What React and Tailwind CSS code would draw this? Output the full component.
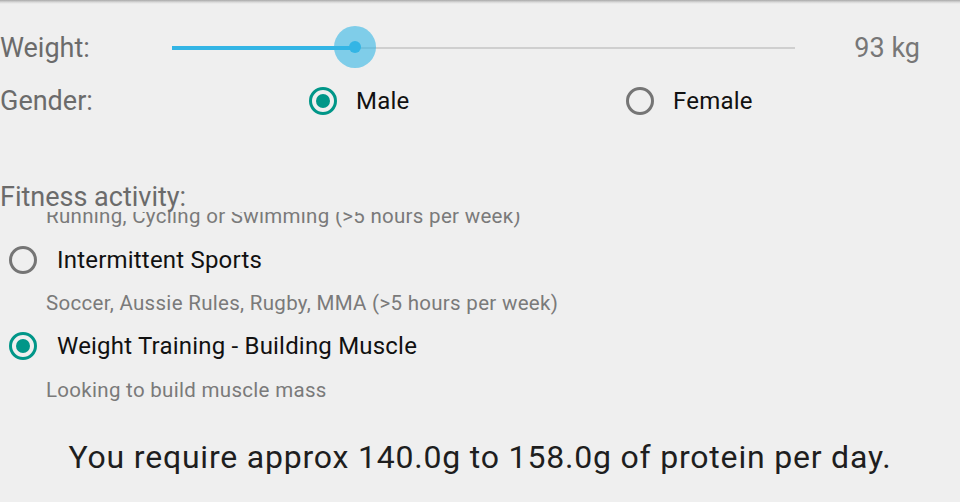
function Radio({ checked }) {
  return checked ? (
    <div className="w-[28px] h-[28px] shrink-0 rounded-full border-[3px] border-[#009688] flex items-center justify-center">
      <div className="w-[14px] h-[14px] rounded-full bg-[#009688]" />
    </div>
  ) : (
    <div className="w-[28px] h-[28px] shrink-0 rounded-full border-[3px] border-[#757575]" />
  );
}

const activities = [
  { desc: "Running, Cycling or Swimming (>5 hours per week)" },
  { title: "Intermittent Sports", checked: false },
  { desc: "Soccer, Aussie Rules, Rugby, MMA (>5 hours per week)", h: "h-[42px]" },
  { title: "Weight Training - Building Muscle", checked: true },
  { desc: "Looking to build muscle mass" },
];

export default function App() {
  return (
    <div className="w-[960px] h-[502px] overflow-hidden bg-[#efefef] font-['Roboto',sans-serif] flex flex-col">
      <div className="h-[4px] shrink-0 bg-gradient-to-b from-[#a8a8a8] via-[#d6d6d6] to-[#efefef]" />

      {/* weight */}
      <div className="mt-[19px] h-[50px] flex items-center">
        <div className="w-[172px] text-[27px] text-[#6b6b6b]">Weight:</div>
        <div className="relative w-[623px] h-[50px] flex items-center">
          <div className="w-[183px] h-[4px] bg-[#33b5e5]" />
          <div className="flex-1 h-[2px] bg-[#cfcfcf]" />
          <div className="absolute left-[162px] top-[3px] w-[42px] h-[42px] rounded-full bg-[#33b5e5]/60 flex items-center justify-center">
            <div className="w-[12px] h-[12px] rounded-full bg-[#33b5e5]" />
          </div>
        </div>
        <div className="ml-auto pr-[40px] text-[27px] text-[#777777]">93 kg</div>
      </div>

      {/* gender */}
      <div className="mt-[3px] h-[50px] flex items-center">
        <div className="w-[309px] text-[27px] text-[#6b6b6b]">Gender:</div>
        <div className="w-[317px] flex items-center gap-[19px]">
          <Radio checked />
          <span className="text-[24px] tracking-[0.2px] text-[#111111]">Male</span>
        </div>
        <div className="flex items-center gap-[19px]">
          <Radio />
          <span className="text-[24px] tracking-[0.2px] text-[#111111]">Female</span>
        </div>
      </div>

      {/* fitness */}
      <div className="mt-[57px] h-[28px] leading-[28px] text-[27px] text-[#6b6b6b]">Fitness activity:</div>
      <div className="mt-[1px] h-[214px] overflow-hidden">
        <div className="-mt-[18px] flex flex-col">
          {activities.map((a, i) =>
            a.title ? (
              <div key={i} className="h-[44px] flex items-center gap-[20px] pl-[9px]">
                <Radio checked={a.checked} />
                <span className="text-[24px] tracking-[0.2px] text-[#111111]">{a.title}</span>
              </div>
            ) : (
              <div key={i} className={`${a.h || "h-[44px]"} flex items-center pl-[46px] text-[20.5px] tracking-[0.3px] text-[#7a7a7a]`}>
                {a.desc}
              </div>
            )
          )}
        </div>
      </div>

      <div className="mt-[11px] h-[40px] flex items-center justify-center text-[32px] tracking-[0.8px] text-[#1e1e1e]">
        You require approx 140.0g to 158.0g of protein per day.
      </div>
    </div>
  );
}
